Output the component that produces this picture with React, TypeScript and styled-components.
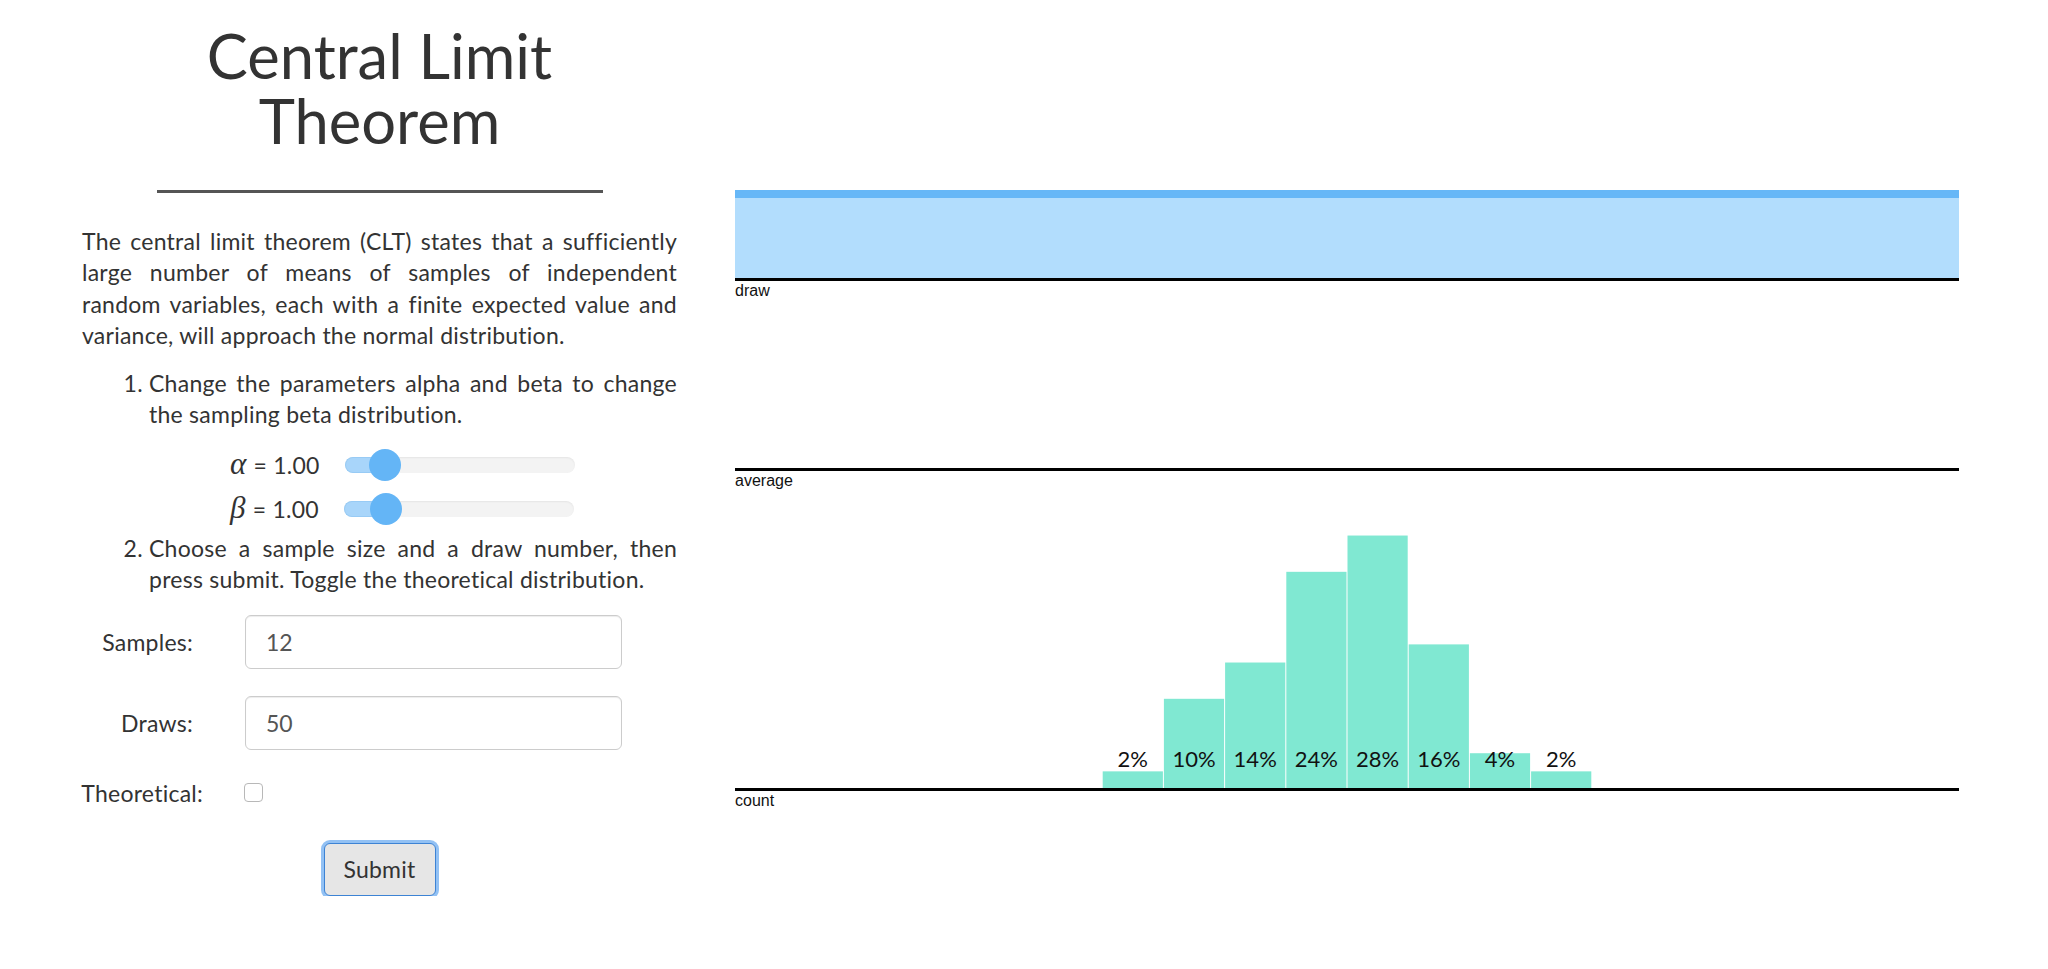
import React from 'react';
import styled, { createGlobalStyle } from 'styled-components';

const GlobalStyle = createGlobalStyle`
  html, body { margin: 0; padding: 0; background: #fff; }
  body { font-family: Lato, "Noto Sans", sans-serif; color: #333; }
  * { box-sizing: border-box; }
`;

const Page = styled.div`
  display: flex;
  align-items: flex-start;
  gap: 58px;
  padding-left: 82px;
  width: 2048px;
`;

const LeftColumn = styled.div`
  width: 595px;
  display: flex;
  flex-direction: column;
`;

const Title = styled.h1`
  margin: 23px 0 0;
  font-size: 61.5px;
  line-height: 65px;
  font-weight: 400;
  text-align: center;
  color: #333;
`;

const Rule = styled.hr`
  width: 446px;
  height: 3px;
  margin: 37px auto 0;
  border: 0;
  background: #555;
`;

const Paragraph = styled.p`
  margin: 33px 0 0;
  font-size: 23px;
  letter-spacing: 0.25px;
  line-height: 31.43px;
`;

const Line = styled.span<{ $last?: boolean }>`
  display: block;
  text-align: ${(p) => (p.$last ? 'left' : 'justify')};
  text-align-last: ${(p) => (p.$last ? 'left' : 'justify')};
`;

const Steps = styled.ol`
  margin: 16px 0 0;
  padding-left: 67px;
  font-size: 23px;
  letter-spacing: 0.25px;
  line-height: 31.43px;
`;

const Step = styled.li`
  padding-left: 0;
`;

const SliderGroup = styled.div`
  display: flex;
  flex-direction: column;
  margin-left: 81px;
  padding: 12px 0 2px;
`;

const SliderRow = styled.div`
  display: flex;
  align-items: center;
  height: 44px;
`;

const SliderLabel = styled.span`
  display: inline-flex;
  align-items: baseline;
  margin-right: 25px;
  font-size: 23px;
  white-space: nowrap;
`;

const Greek = styled.i`
  font-family: "Liberation Serif", "DejaVu Serif", serif;
  font-size: 31px;
  margin-right: 7px;
`;

const Track = styled.div`
  position: relative;
  width: 230px;
  height: 16px;
  border-radius: 8px;
  background: #f3f3f3;
  box-shadow: inset 0 1px 2px rgba(0, 0, 0, 0.06);
`;

const TrackFill = styled.div`
  position: absolute;
  left: 0;
  top: 0;
  bottom: 0;
  border-radius: 8px 0 0 8px;
  background: #a8d5fa;
  border: 1px solid #98cbf5;
  border-right: 0;
`;

const Thumb = styled.div`
  position: absolute;
  top: 50%;
  width: 32px;
  height: 32px;
  margin: -16px 0 0 -16px;
  border-radius: 50%;
  background: #64b5f6;
`;

const Form = styled.form`
  margin-top: 19px;
  display: flex;
  flex-direction: column;
`;

const FieldRow = styled.div<{ $height: number; $gap: number }>`
  display: grid;
  grid-template-columns: 163px 377px;
  align-items: center;
  height: ${(p) => p.$height}px;
  margin-bottom: ${(p) => p.$gap}px;
`;

const FieldLabel = styled.label<{ $right: number }>`
  justify-self: end;
  margin-right: ${(p) => p.$right}px;
  font-size: 23px;
  letter-spacing: 0.25px;
  white-space: nowrap;
`;

const TextInput = styled.input`
  width: 377px;
  height: 54px;
  padding: 0 20px;
  border: 1px solid #ccc;
  border-radius: 6px;
  box-shadow: inset 0 1px 1px rgba(0, 0, 0, 0.075);
  font-family: Lato, "Noto Sans", sans-serif;
  font-size: 23px;
  color: #555;
  outline: none;
`;

const CheckBox = styled.input`
  appearance: none;
  margin: 0 0 0 -1px;
  width: 19px;
  height: 19px;
  border: 1px solid #b8b8b8;
  border-radius: 4px;
  background: #fff;
`;

const SubmitButton = styled.button`
  align-self: center;
  width: 112px;
  height: 53px;
  border: 1px solid #3d83d4;
  border-radius: 6px;
  background: #e6e6e6;
  box-shadow: 0 0 0 3px rgba(110, 172, 240, 0.75);
  font-family: Lato, "Noto Sans", sans-serif;
  font-size: 23px;
  letter-spacing: 0.25px;
  color: #333;
  padding: 0;
`;

const RightColumn = styled.div`
  width: 1224px;
  padding-top: 190px;
  display: flex;
  flex-direction: column;
`;

const ChartSvg = styled.svg`
  display: block;
  width: 1224px;
  overflow: visible;
`;

const AxisLabel = styled.text`
  font-family: "Liberation Sans", Arial, sans-serif;
  font-size: 16px;
  fill: #111;
`;

const BarLabel = styled.text`
  font-family: Lato, "Noto Sans", sans-serif;
  font-size: 22px;
  fill: #111;
`;

const W = 1224;

type ChartProps = {
  height: number;
  axisY: number;
  label: string;
  children?: React.ReactNode;
};

const Chart = ({ height, axisY, label, children }: ChartProps) => (
  <ChartSvg height={height} viewBox={`0 0 ${W} ${height}`}>
    {children}
    <rect x={0} y={axisY} width={W} height={3} fill="#000" />
    <AxisLabel x={0} y={axisY + 18}>
      {label}
    </AxisLabel>
  </ChartSvg>
);

const bins = [
  { bin: 6, pct: 2 },
  { bin: 7, pct: 10 },
  { bin: 8, pct: 14 },
  { bin: 9, pct: 24 },
  { bin: 10, pct: 28 },
  { bin: 11, pct: 16 },
  { bin: 12, pct: 4 },
  { bin: 13, pct: 2 },
];

const BIN_W = W / 20;

type SliderProps = { symbol: string; value: number; max: number };

const Slider = ({ symbol, value, max }: SliderProps) => {
  const pos = 16 + (value / max) * (230 - 32);
  return (
    <SliderRow>
      <SliderLabel>
        <Greek>{symbol}</Greek>= {value.toFixed(2)}
      </SliderLabel>
      <Track>
        <TrackFill style={{ width: pos }} />
        <Thumb style={{ left: pos }} />
      </Track>
    </SliderRow>
  );
};

export default function App() {
  const countAxis = 295;
  return (
    <>
      <GlobalStyle />
      <Page>
        <LeftColumn>
          <Title>
            Central Limit
            <br />
            Theorem
          </Title>
          <Rule />
          <Paragraph>
            <Line>The central limit theorem (CLT) states that a sufficiently</Line>
            <Line>large number of means of samples of independent</Line>
            <Line>random variables, each with a finite expected value and</Line>
            <Line $last>variance, will approach the normal distribution.</Line>
          </Paragraph>
          <Steps>
            <Step>
              <Line>Change the parameters alpha and beta to change</Line>
              <Line $last>the sampling beta distribution.</Line>
              <SliderGroup>
                <Slider symbol="α" value={1} max={8} />
                <Slider symbol="β" value={1} max={7.6} />
              </SliderGroup>
            </Step>
            <Step>
              <Line>Choose a sample size and a draw number, then</Line>
              <Line $last>press submit. Toggle the theoretical distribution.</Line>
            </Step>
          </Steps>
          <Form onSubmit={(e) => e.preventDefault()}>
            <FieldRow $height={54} $gap={27}>
              <FieldLabel $right={52}>Samples:</FieldLabel>
              <TextInput readOnly value="12" />
            </FieldRow>
            <FieldRow $height={54} $gap={27}>
              <FieldLabel $right={52}>Draws:</FieldLabel>
              <TextInput readOnly value="50" />
            </FieldRow>
            <FieldRow $height={32} $gap={34}>
              <FieldLabel $right={42}>Theoretical:</FieldLabel>
              <CheckBox type="checkbox" />
            </FieldRow>
            <SubmitButton type="submit">Submit</SubmitButton>
          </Form>
        </LeftColumn>
        <RightColumn>
          <Chart height={113} axisY={88} label="draw">
            <rect x={0} y={0} width={W} height={88} fill="#b2ddfd" />
            <rect x={0} y={0} width={W} height={8} fill="#66b7f7" />
          </Chart>
          <Chart height={190} axisY={165} label="average" />
          <Chart height={320} axisY={countAxis} label="count">
            {bins.map(({ bin, pct }) => {
              const h = 9.07 * pct - 1.5;
              const x = bin * BIN_W + 0.5;
              return (
                <g key={bin}>
                  <rect x={x} y={countAxis - h} width={BIN_W - 1} height={h} fill="#80e8d2" />
                  <BarLabel x={x + (BIN_W - 1) / 2} y={countAxis - 21} textAnchor="middle">
                    {pct}%
                  </BarLabel>
                </g>
              );
            })}
          </Chart>
        </RightColumn>
      </Page>
    </>
  );
}
